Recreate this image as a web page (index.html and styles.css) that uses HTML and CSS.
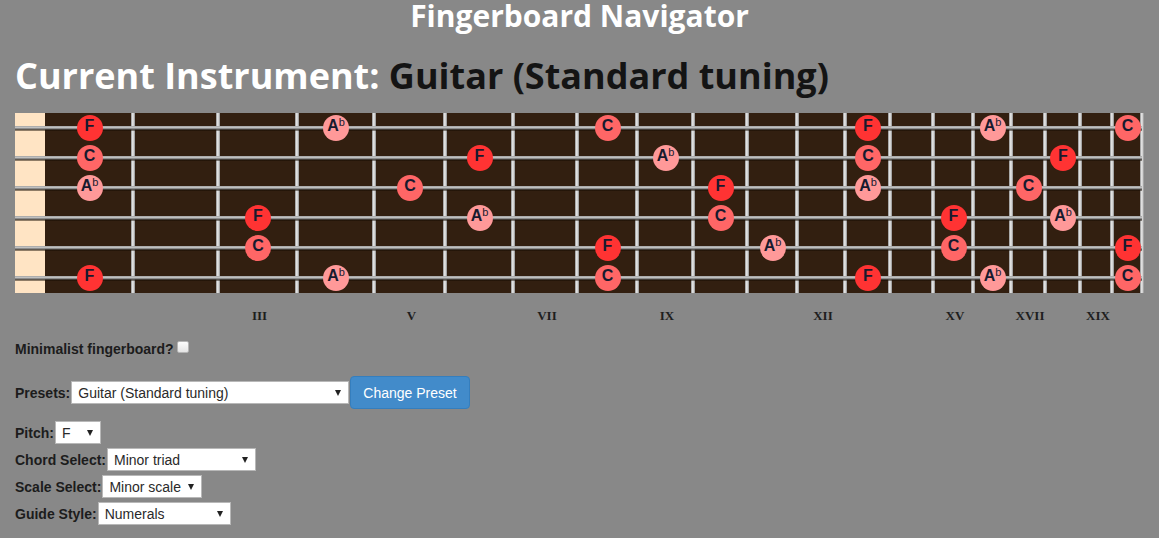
FILE: index.html
```html
<!DOCTYPE html>
<html>
<head>
<meta charset="utf-8">
<title>Fingerboard Navigator</title>
<link rel="stylesheet" href="styles.css">
</head>
<body>
<h1 class="title">Fingerboard Navigator</h1>
<h2 class="instrument">Current Instrument: <span class="instrument-name">Guitar (Standard tuning)</span></h2>

<div class="board">
  <div class="string">
    <span class="cell nut"></span>
    <span class="cell"><span class="note root">F</span></span>
    <span class="cell"></span><span class="cell"></span>
    <span class="cell"><span class="note third">A<span class="flat">b</span></span></span>
    <span class="cell"></span><span class="cell"></span><span class="cell"></span>
    <span class="cell"><span class="note fifth">C</span></span>
    <span class="cell"></span><span class="cell"></span><span class="cell"></span><span class="cell"></span>
    <span class="cell"><span class="note root">F</span></span>
    <span class="cell"></span><span class="cell"></span>
    <span class="cell"><span class="note third">A<span class="flat">b</span></span></span>
    <span class="cell"></span><span class="cell"></span><span class="cell"></span>
    <span class="cell"><span class="note fifth">C</span></span>
  </div>
  <div class="string">
    <span class="cell nut"></span>
    <span class="cell"><span class="note fifth">C</span></span>
    <span class="cell"></span><span class="cell"></span><span class="cell"></span><span class="cell"></span>
    <span class="cell"><span class="note root">F</span></span>
    <span class="cell"></span><span class="cell"></span>
    <span class="cell"><span class="note third">A<span class="flat">b</span></span></span>
    <span class="cell"></span><span class="cell"></span><span class="cell"></span>
    <span class="cell"><span class="note fifth">C</span></span>
    <span class="cell"></span><span class="cell"></span><span class="cell"></span><span class="cell"></span>
    <span class="cell"><span class="note root">F</span></span>
    <span class="cell"></span><span class="cell"></span>
  </div>
  <div class="string">
    <span class="cell nut"></span>
    <span class="cell"><span class="note third">A<span class="flat">b</span></span></span>
    <span class="cell"></span><span class="cell"></span><span class="cell"></span>
    <span class="cell"><span class="note fifth">C</span></span>
    <span class="cell"></span><span class="cell"></span><span class="cell"></span><span class="cell"></span>
    <span class="cell"><span class="note root">F</span></span>
    <span class="cell"></span><span class="cell"></span>
    <span class="cell"><span class="note third">A<span class="flat">b</span></span></span>
    <span class="cell"></span><span class="cell"></span><span class="cell"></span>
    <span class="cell"><span class="note fifth">C</span></span>
    <span class="cell"></span><span class="cell"></span><span class="cell"></span>
  </div>
  <div class="string">
    <span class="cell nut"></span>
    <span class="cell"></span><span class="cell"></span>
    <span class="cell"><span class="note root">F</span></span>
    <span class="cell"></span><span class="cell"></span>
    <span class="cell"><span class="note third">A<span class="flat">b</span></span></span>
    <span class="cell"></span><span class="cell"></span><span class="cell"></span>
    <span class="cell"><span class="note fifth">C</span></span>
    <span class="cell"></span><span class="cell"></span><span class="cell"></span><span class="cell"></span>
    <span class="cell"><span class="note root">F</span></span>
    <span class="cell"></span><span class="cell"></span>
    <span class="cell"><span class="note third">A<span class="flat">b</span></span></span>
    <span class="cell"></span><span class="cell"></span>
  </div>
  <div class="string">
    <span class="cell nut"></span>
    <span class="cell"></span><span class="cell"></span>
    <span class="cell"><span class="note fifth">C</span></span>
    <span class="cell"></span><span class="cell"></span><span class="cell"></span><span class="cell"></span>
    <span class="cell"><span class="note root">F</span></span>
    <span class="cell"></span><span class="cell"></span>
    <span class="cell"><span class="note third">A<span class="flat">b</span></span></span>
    <span class="cell"></span><span class="cell"></span><span class="cell"></span>
    <span class="cell"><span class="note fifth">C</span></span>
    <span class="cell"></span><span class="cell"></span><span class="cell"></span><span class="cell"></span>
    <span class="cell"><span class="note root">F</span></span>
  </div>
  <div class="string">
    <span class="cell nut"></span>
    <span class="cell"><span class="note root">F</span></span>
    <span class="cell"></span><span class="cell"></span>
    <span class="cell"><span class="note third">A<span class="flat">b</span></span></span>
    <span class="cell"></span><span class="cell"></span><span class="cell"></span>
    <span class="cell"><span class="note fifth">C</span></span>
    <span class="cell"></span><span class="cell"></span><span class="cell"></span><span class="cell"></span>
    <span class="cell"><span class="note root">F</span></span>
    <span class="cell"></span><span class="cell"></span>
    <span class="cell"><span class="note third">A<span class="flat">b</span></span></span>
    <span class="cell"></span><span class="cell"></span><span class="cell"></span>
    <span class="cell"><span class="note fifth">C</span></span>
  </div>
</div>

<div class="fret-labels">
  <span></span><span></span><span></span>
  <span>III</span><span></span>
  <span>V</span><span></span>
  <span>VII</span><span></span>
  <span>IX</span><span></span><span></span>
  <span>XII</span><span></span><span></span>
  <span>XV</span><span></span>
  <span>XVII</span><span></span>
  <span>XIX</span><span></span>
</div>

<form class="controls">
  <div class="row row-minimal">
    <label class="label" for="minimal">Minimalist fingerboard?</label><input class="check" type="checkbox" id="minimal">
  </div>
  <div class="row row-presets">
    <label class="label">Presets:</label>
    <span class="select-wrap w-presets"><select class="select"><option>Guitar (Standard tuning)</option></select></span>
    <button class="btn" type="button">Change Preset</button>
  </div>
  <div class="row row-field">
    <label class="label">Pitch:</label>
    <span class="select-wrap w-pitch"><select class="select"><option>F</option></select></span>
  </div>
  <div class="row row-field">
    <label class="label">Chord Select:</label>
    <span class="select-wrap w-chord"><select class="select"><option>Minor triad</option></select></span>
  </div>
  <div class="row row-field">
    <label class="label">Scale Select:</label>
    <span class="select-wrap w-scale"><select class="select"><option>Minor scale</option></select></span>
  </div>
  <div class="row row-field">
    <label class="label">Guide Style:</label>
    <span class="select-wrap w-guide"><select class="select"><option>Numerals</option></select></span>
  </div>
</form>
</body>
</html>
```

FILE: styles.css
```css
:root {
  --frets: 30px 88px 85px 79px 77px 71px 68px 64px 60px 56px 54px 50px 48px 45px 43px 40px 38px 34px 35px 32px 30px;
}

* { box-sizing: border-box; }

body {
  margin: 0;
  background: #888888;
  font-family: "Open Sans", "Liberation Sans", sans-serif;
  color: #111;
}

.title {
  margin: 0;
  font-size: 30px;
  line-height: 32px;
  font-weight: 700;
  color: #ffffff;
  text-align: center;
}

.instrument {
  margin: 20px 0 0 15px;
  font-size: 36px;
  line-height: 48px;
  font-weight: 700;
  color: #ffffff;
}

.instrument-name { color: #141414; }

.board {
  margin: 13px 0 0 15px;
  width: 1127px;
  background: linear-gradient(to right, #ffe4c4 30px, #321f10 30px);
}

.string {
  position: relative;
  display: grid;
  grid-template-columns: var(--frets);
  height: 30px;
}

.string::before {
  content: "";
  position: absolute;
  left: 0;
  right: 0;
  top: 13px;
  height: 5px;
  background: linear-gradient(to bottom, #8a8a8a 0, #d0d0d0 1px, #b0b0b0 2px, #6a6a6a 3px, rgba(20, 10, 0, 0.7) 4px, rgba(20, 10, 0, 0.25) 5px);
  z-index: 1;
}

.cell {
  position: relative;
  display: flex;
  align-items: center;
  justify-content: center;
}

.cell::after {
  content: "";
  position: absolute;
  top: 0;
  bottom: 0;
  right: -2px;
  width: 4px;
  background: linear-gradient(to right, #8c8c8c, #e6e6e6 40%, #d8d8d8 60%, #8c8c8c);
}

.cell.nut::after { display: none; }

.note {
  position: relative;
  z-index: 2;
  width: 26px;
  height: 26px;
  margin-left: 1px;
  border-radius: 50%;
  font-family: "Liberation Sans", Arial, sans-serif;
  font-weight: 700;
  font-size: 16px;
  line-height: 22px;
  text-align: center;
  color: #171a2e;
}

.root { background: #ff3333; }
.fifth { background: #ff6666; }
.third { background: #ff9999; }

.flat {
  font-size: 11px;
  font-weight: 400;
  vertical-align: 5px;
  line-height: 0;
}

.fret-labels {
  display: grid;
  grid-template-columns: var(--frets);
  margin: 13px 0 0 17px;
  width: 1127px;
  height: 20px;
  font-family: "Liberation Serif", "Times New Roman", serif;
  font-weight: 700;
  font-size: 13px;
  line-height: 20px;
  color: #1e1e1e;
  text-align: center;
}

.controls {
  margin: 13px 0 0 15px;
  font-family: "Liberation Sans", Arial, sans-serif;
  font-size: 14px;
}

.row {
  display: flex;
  align-items: center;
}

.row-minimal { height: 20px; }
.row-presets { margin-top: 17px; height: 33px; }
.row-field { margin-top: 4px; height: 23px; }
.row-presets + .row-field { margin-top: 12px; }

.label {
  font-weight: 700;
  color: #1c1c1c;
}

.check {
  appearance: none;
  -webkit-appearance: none;
  width: 12px;
  height: 12px;
  margin: 0 0 4px 3px;
  border: 1px solid #b5b5b5;
  border-radius: 2px;
  background: linear-gradient(#fcfcfc, #e4e4e4);
}

.select-wrap {
  position: relative;
  display: inline-block;
  height: 23px;
  margin-left: 1px;
}

.select-wrap::after {
  content: "";
  position: absolute;
  right: 8px;
  top: 9px;
  border-left: 3.5px solid transparent;
  border-right: 3.5px solid transparent;
  border-top: 6px solid #222;
  pointer-events: none;
}

.select {
  appearance: none;
  -webkit-appearance: none;
  width: 100%;
  height: 23px;
  margin: 0;
  padding: 0 18px 0 6px;
  border: 1px solid #b8b8b8;
  border-radius: 0;
  background: #ffffff;
  font-family: "Liberation Sans", Arial, sans-serif;
  font-size: 14px;
  color: #2a2a2a;
}

.w-presets { width: 278px; }
.w-pitch { width: 46px; }
.w-chord { width: 149px; }
.w-scale { width: 100px; }
.w-guide { width: 133px; }

.btn {
  height: 33px;
  margin-left: 1px;
  padding: 0 12px;
  border: 1px solid #357ebd;
  border-radius: 4px;
  background: #428bca;
  color: #ffffff;
  font-family: "Liberation Sans", Arial, sans-serif;
  font-size: 14px;
}
```
